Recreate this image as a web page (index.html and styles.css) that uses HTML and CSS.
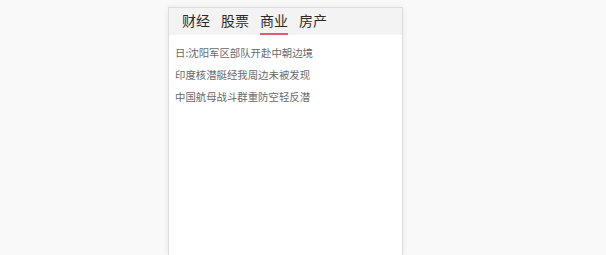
FILE: index.html
```html
<!DOCTYPE html>
<html>
<head>
    <title>新闻</title>
    <link rel="stylesheet" href="styles.css">
</head>
<body>
    <div class="panel">
        <ul class="tabs">
            <li>财经</li>
            <li>股票</li>
            <li class="active">商业</li>
            <li>房产</li>
        </ul>
        <ul class="news">
            <li>日:沈阳军区部队开赴中朝边境</li>
            <li>印度核潜艇经我周边未被发现</li>
            <li>中国航母战斗群重防空轻反潜</li>
        </ul>
    </div>
</body>
</html>
```

FILE: styles.css
```css
body {
    margin: 0;
    padding: 7px 0 0 168px;
    background-color: #f9f9f9;
    font-family: "Noto Sans CJK SC", "Liberation Sans", sans-serif;
    height: 248px;
    overflow: hidden;
}
ul {
    list-style: none;
    margin: 0;
    padding: 0;
}
.panel {
    width: 233px;
    height: 247px;
    background-color: #fff;
    border: 1px solid #ddd;
    border-bottom: none;
    box-shadow: 0 0 6px rgba(0, 0, 0, 0.08);
}
.tabs {
    display: flex;
    gap: 11px;
    padding: 0 0 0 13px;
    height: 27px;
    background-color: #f3f3f3;
}
.tabs li {
    font-size: 14px;
    line-height: 25px;
    color: #2a2a2a;
    border-bottom: 2px solid transparent;
}
.tabs li.active {
    border-bottom-color: #d9606c;
}
.news {
    padding: 7px 0 0 6px;
}
.news li {
    font-size: 10.4px;
    line-height: 22px;
    color: #6a6a6a;
}
```
